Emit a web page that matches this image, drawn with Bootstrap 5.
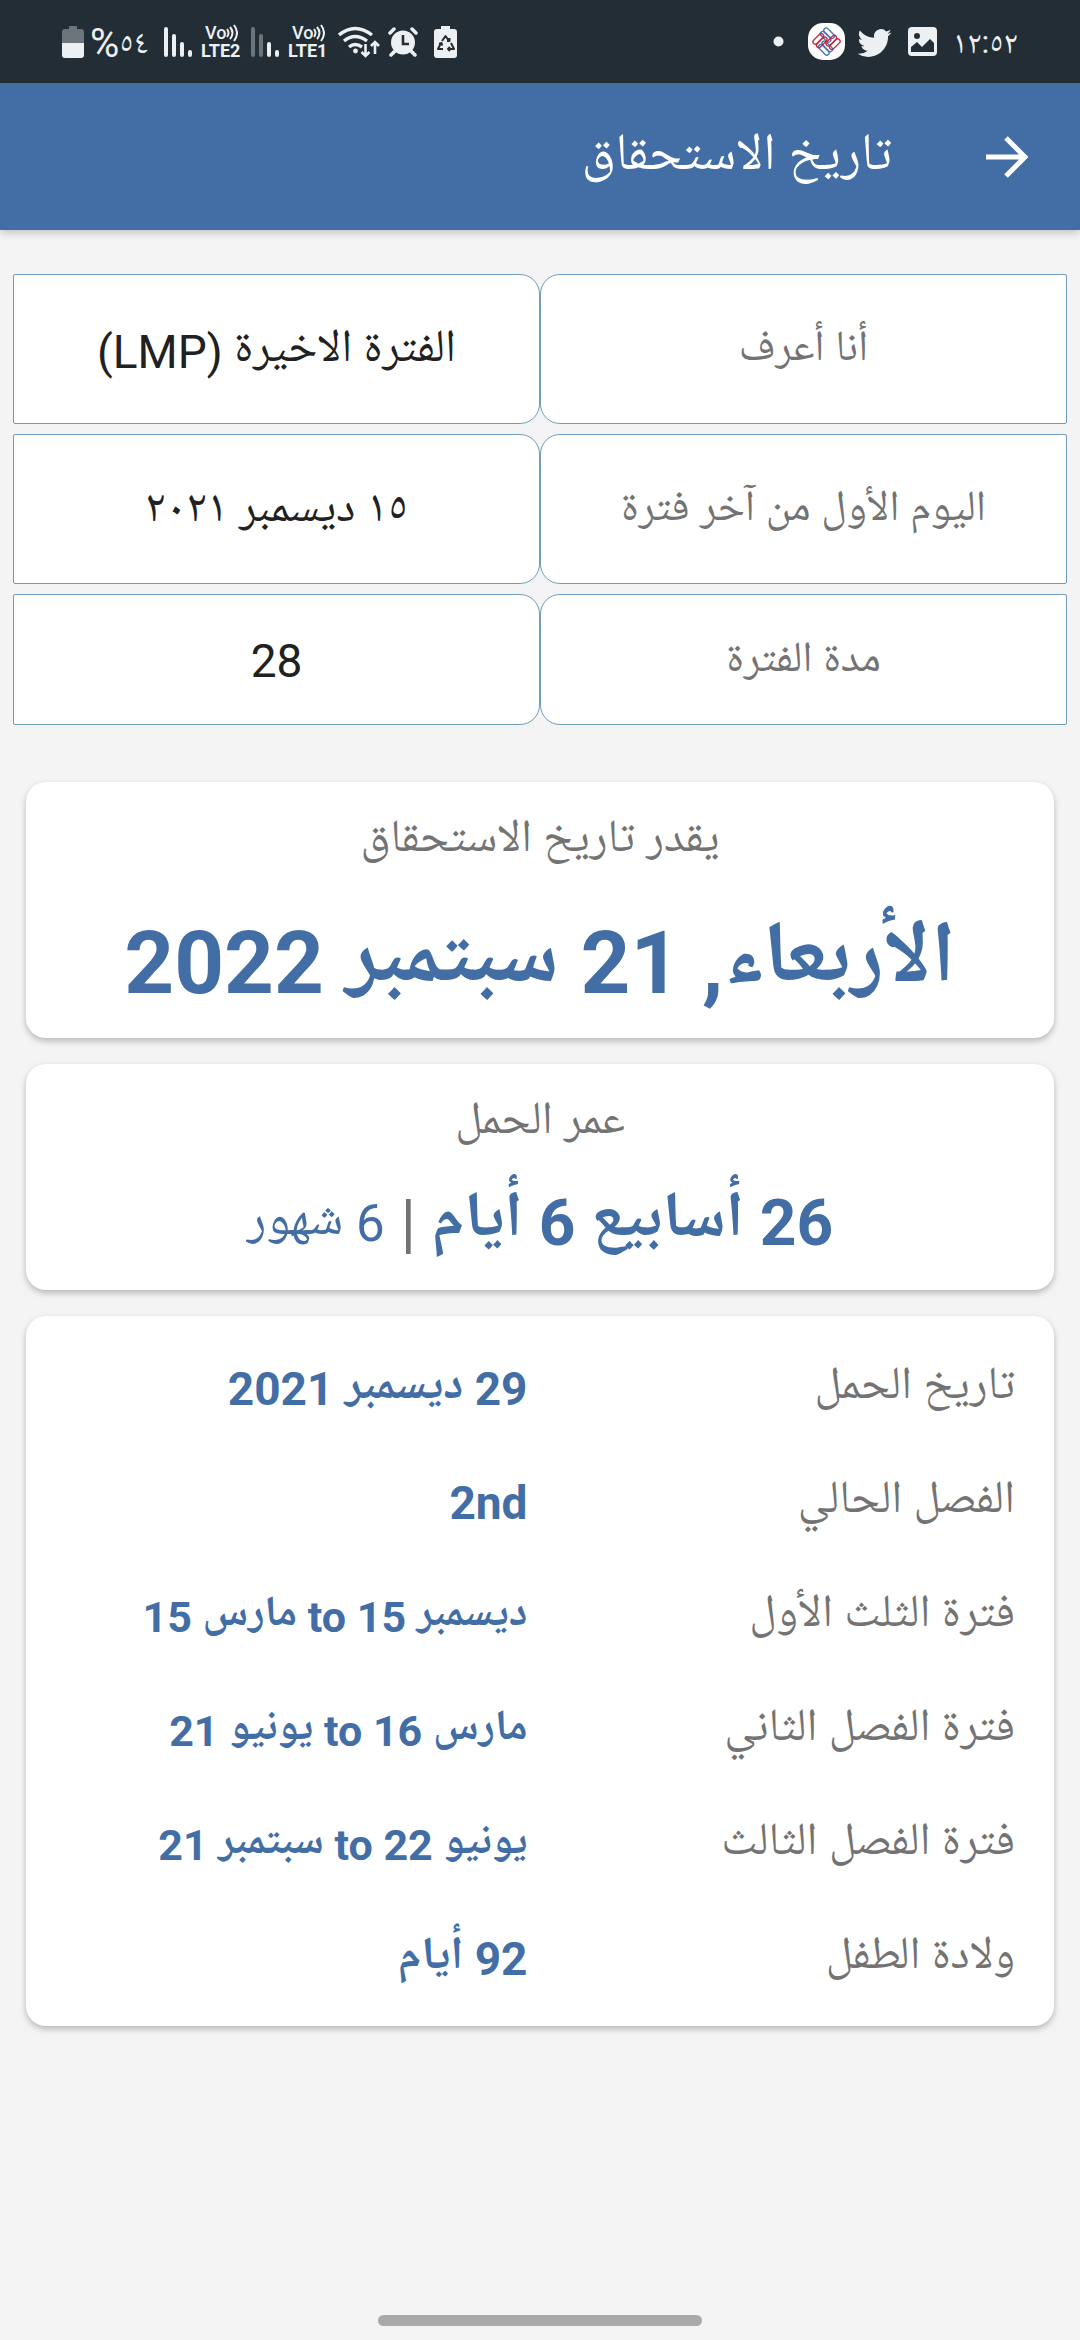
<!DOCTYPE html>
<html lang="ar" dir="rtl">
<head>
<meta charset="utf-8">
<meta name="viewport" content="width=device-width, initial-scale=1">
<title>تاريخ الاستحقاق</title>
<link href="https://cdn.jsdelivr.net/npm/bootstrap@5.3.0/dist/css/bootstrap.min.css" rel="stylesheet">
<script src="https://cdn.jsdelivr.net/npm/bootstrap@5.3.0/dist/js/bootstrap.bundle.min.js"></script>
<style>
  body { background: #f4f4f4; font-family: Roboto, "Noto Naskh Arabic", "Noto Sans Arabic", "DejaVu Sans", sans-serif; font-size: 46px; line-height: 60px; color: #212121; }
  .blue { color: #426ea5; }
  .muted { color: #737373; }
  /* Latin runs sit lower than the Arabic baseline */
  .ltn { vertical-align: -7px; line-height: 0; }

  .status { background: #232d35; color: #ecf0f3; height: 83px; padding: 0 62px; line-height: 36px; font-size: 32px; }
  .status svg { display: block; flex: none; }
  .status .charge { margin-left: 6px; }
  .status .pct { font-size: 40px; line-height: 0; vertical-align: -4px; }
  .volte { font-size: 18px; line-height: 18px; font-weight: 700; min-width: 42px; }
  .volte .top { font-size: 18px; font-weight: 500; }

  .appbar { background: #426ea5; height: 147px; padding: 0 52px; box-shadow: 0 3px 8px rgba(0,0,0,.2); }
  .appbar h1 { font-size: 52px; line-height: 60px; font-weight: 400; color: #fff; padding-bottom: 10px; }
  .back { margin-inline-end: 94px; }

  .fields { padding: 44px 13px 0; gap: 10px; }
  .cell { flex: 1 1 0; min-width: 0; min-height: 150px; padding: 0 0 8px; background: #fff; border: 1px solid #6f9dba; text-align: center; display: flex; align-items: center; justify-content: center; color: #212121; }
  .short .cell { min-height: 131px; }
  label.cell { border-radius: 20px 2px 2px 20px; font-size: 43px; color: #737373; }
  button.cell, input.cell { border-radius: 2px 20px 20px 2px; }
  input.cell { padding: 3px 0 0; }

  .panels { padding: 57px 26px; gap: 26px; }
  .panel { border: 0; border-radius: 20px; box-shadow: 0 3px 6px rgba(0,0,0,.25); }
  .panel-due { padding: 23px 20px 37px; }
  .panel-age { padding: 23px 20px 35px; }
  .panel-facts { padding: 9px 39px 17px 14px; }
  .due { font-size: 87px; line-height: 100px; font-weight: 700; margin-top: 36px; }
  .due .ltn { vertical-align: -12px; }
  .age { font-size: 64px; line-height: 80px; margin-top: 28px; }
  .age .ltn { vertical-align: -9px; }
  .age small { font-size: 51px; line-height: 0; vertical-align: 2px; }
  .age small .ltn { vertical-align: -7px; }
  .facts th, .facts td { width: 50%; height: 114px; padding: 0; font-weight: 400; }
  .facts td { font-weight: 700; }
  .facts .span-of td { font-size: 43px; }

  .homebar { width: 324px; height: 11px; border-radius: 6px; background: #a9a9a9; margin-bottom: 14px; }
</style>
</head>
<body class="d-flex flex-column min-vh-100">
<div class="status d-flex align-items-center justify-content-between" dir="ltr">
  <div class="d-flex align-items-center">
    <svg width="22" height="34" viewBox="0 0 22 34"><path fill="#6d757c" d="M7 1h8v3h4q3 0 3 3v11H0V7q0-3 3-3h4z"/><path fill="#ecf0f3" d="M0 18h22v12q0 3-3 3H3q-3 0-3-3z"/></svg>
    <span class="charge"><span class="pct">%</span>٥٤</span>
    <svg class="ms-3" width="29" height="32" viewBox="0 0 29 32" fill="none" stroke="#ecf0f3" stroke-width="4" stroke-linecap="round"><path d="M2 3v26M10 10v19M18 18v11M26 26v3"/></svg>
    <div class="volte ms-2">
      <div class="top d-flex align-items-center ps-1">Vo<svg width="12" height="18" viewBox="0 0 12 18" fill="none" stroke="#ecf0f3" stroke-width="2"><path d="M1 5q3 4 0 8M4 3q5 6 0 12M8 1q6 8 0 16"/></svg></div>
      <div>LTE2</div>
    </div>
    <svg class="ms-2" width="29" height="32" viewBox="0 0 29 32" fill="none" stroke="#ecf0f3" stroke-width="4" stroke-linecap="round"><path stroke="#6d757c" d="M2 3v26M10 10v19"/><path d="M18 18v11M26 26v3"/></svg>
    <div class="volte ms-2">
      <div class="top d-flex align-items-center ps-1">Vo<svg width="12" height="18" viewBox="0 0 12 18" fill="none" stroke="#ecf0f3" stroke-width="2"><path d="M1 5q3 4 0 8M4 3q5 6 0 12M8 1q6 8 0 16"/></svg></div>
      <div>LTE1</div>
    </div>
    <svg class="ms-2" width="42" height="32" viewBox="0 0 42 32" fill="none" stroke="#ecf0f3" stroke-width="3.4"><path d="M1 9Q17-4 34 9M6 15Q17 6 29 15M11 21Q17 16 24 21"/><circle cx="17.500" cy="25" r="2.400" fill="#ecf0f3" stroke="none"/><path stroke-width="2.600" d="M27.500 18v11M23.500 26l4 4 4-4M37 28V16M33 20l4-4 4 4"/></svg>
    <svg class="ms-2" width="30" height="30" viewBox="0 0 30 30"><g stroke="#ecf0f3" stroke-width="3.5" stroke-linecap="round"><path d="M2 6l4-4M28 6l-4-4M7 24l-4 4M23 24l4 4"/></g><circle cx="15" cy="15.500" r="13.500" fill="#232d35"/><circle cx="15" cy="15.500" r="12" fill="#ecf0f3"/><path stroke="#ecf0f3" stroke-width="3.500" d="M8 23l-3 3M22 23l3 3"/><path d="M15 8v9h6" fill="none" stroke="#232d35" stroke-width="2.600"/></svg>
    <svg class="ms-3" width="23" height="34" viewBox="0 0 23 34"><path fill="#ecf0f3" d="M7 1h9v3h4q3 0 3 3v23q0 3-3 3H3q-3 0-3-3V7q0-3 3-3h4z"/><path fill="none" stroke="#232d35" stroke-width="2" stroke-linejoin="round" d="M8 16l3.500-5 3.500 5M17 18l3 6h-6M9 24H4l3-6M13 16h2.500v-3M16 22l-2 2 2 2M5 19l2.500-1 .8 2.500"/></svg>
  </div>
  <div class="d-flex align-items-center">
    <svg width="11" height="11" viewBox="0 0 11 11"><circle cx="5.500" cy="5.500" r="5" fill="#ecf0f3"/></svg>
    <svg class="ms-4" width="37" height="37" viewBox="0 0 37 37"><rect width="37" height="37" rx="15" fill="#fff"/><g transform="rotate(45 18.500 18.500)" fill="none" stroke-width="1.300"><g stroke="#3f72b8"><rect x="8" y="8.500" width="13" height="4.600" rx="2.300"/><rect x="8" y="13.500" width="13" height="4.600" rx="2.300"/><rect x="16" y="19" width="13" height="4.600" rx="2.300"/><rect x="16" y="24" width="13" height="4.600" rx="2.300"/></g><g stroke="#c32a3a"><rect x="19" y="8" width="4.600" height="13" rx="2.300"/><rect x="24" y="8" width="4.600" height="13" rx="2.300"/><rect x="8.500" y="16" width="4.600" height="13" rx="2.300"/><rect x="13.500" y="16" width="4.600" height="13" rx="2.300"/></g></g></svg>
    <svg class="ms-2 ps-1" width="39" height="34" viewBox="0 0 16 16" fill="#ecf0f3"><path d="M5.026 15c6.038 0 9.341-5.003 9.341-9.334 0-.14 0-.282-.006-.422A6.685 6.685 0 0 0 16 3.542a6.658 6.658 0 0 1-1.889.518 3.301 3.301 0 0 0 1.447-1.817 6.533 6.533 0 0 1-2.087.793A3.286 3.286 0 0 0 7.875 6.030a9.325 9.325 0 0 1-6.767-3.429 3.289 3.289 0 0 0 1.018 4.382A3.323 3.323 0 0 1 .64 6.575v.045a3.288 3.288 0 0 0 2.632 3.218 3.203 3.203 0 0 1-.865.115 3.230 3.230 0 0 1-.614-.057 3.283 3.283 0 0 0 3.067 2.277A6.588 6.588 0 0 1 .78 13.580a6.320 6.320 0 0 1-.78-.045A9.344 9.344 0 0 0 5.026 15z"/></svg>
    <svg class="ms-3" width="29" height="29" viewBox="0 0 29 29"><rect width="29" height="29" rx="4" fill="#ecf0f3"/><circle cx="9" cy="9" r="3" fill="#232d35"/><path fill="#232d35" d="M3 25v-5l6-5 5 5 8-8 4 4v9z"/></svg>
    <span class="ms-3">١٢:٥٢</span>
  </div>
</div>
<header class="appbar d-flex align-items-center">
  <a href="#" class="back d-block" aria-label="رجوع"><svg class="d-block" width="42" height="42" viewBox="0 0 42 42" fill="none" stroke="#fff" stroke-width="5"><path d="M0 21h38M20 2l19 19-19 19"/></svg></a>
  <h1 class="m-0">تاريخ الاستحقاق</h1>
</header>
<main class="flex-grow-1">
  <form class="fields d-flex flex-column">
    <div class="d-flex"><label class="cell" for="known">أنا أعرف</label><button type="button" class="cell" id="known"><span>الفترة الاخيرة <span class="ltn">(LMP)</span></span></button></div>
    <div class="d-flex"><label class="cell" for="first-day">اليوم الأول من آخر فترة</label><button type="button" class="cell" id="first-day">١٥ ديسمبر ٢٠٢١</button></div>
    <div class="d-flex short"><label class="cell" for="cycle">مدة الفترة</label><input type="text" inputmode="numeric" class="cell" id="cycle" value="28"></div>
  </form>
  <div class="panels d-flex flex-column">
    <section class="card panel panel-due text-center">
      <div class="muted">يقدر تاريخ الاستحقاق</div>
      <div class="due blue">الأربعاء<span class="ltn">, 21</span> سبتمبر <span class="ltn">2022</span></div>
    </section>
    <section class="card panel panel-age text-center">
      <div class="muted">عمر الحمل</div>
      <div class="age muted"><strong class="blue"><span class="ltn">26</span> أسابيع <span class="ltn">6</span> أيام</strong> <span class="ltn">|</span> <small class="blue"><span class="ltn">6</span> شهور</small></div>
    </section>
    <section class="card panel panel-facts">
      <table class="facts w-100">
        <tr><th scope="row" class="muted">تاريخ الحمل</th><td class="blue"><span class="ltn">29</span> ديسمبر <span class="ltn">2021</span></td></tr>
        <tr><th scope="row" class="muted">الفصل الحالي</th><td class="blue"><span class="ltn">2nd</span></td></tr>
        <tr class="span-of"><th scope="row" class="muted">فترة الثلث الأول</th><td class="blue">ديسمبر <span class="ltn">15 to</span> مارس <span class="ltn">15</span></td></tr>
        <tr class="span-of"><th scope="row" class="muted">فترة الفصل الثاني</th><td class="blue">مارس <span class="ltn">16 to</span> يونيو <span class="ltn">21</span></td></tr>
        <tr class="span-of"><th scope="row" class="muted">فترة الفصل الثالث</th><td class="blue">يونيو <span class="ltn">22 to</span> سبتمبر <span class="ltn">21</span></td></tr>
        <tr><th scope="row" class="muted">ولادة الطفل</th><td class="blue"><span class="ltn">92</span> أيام</td></tr>
      </table>
    </section>
  </div>
</main>
<div class="homebar mx-auto"></div>
</body>
</html>
